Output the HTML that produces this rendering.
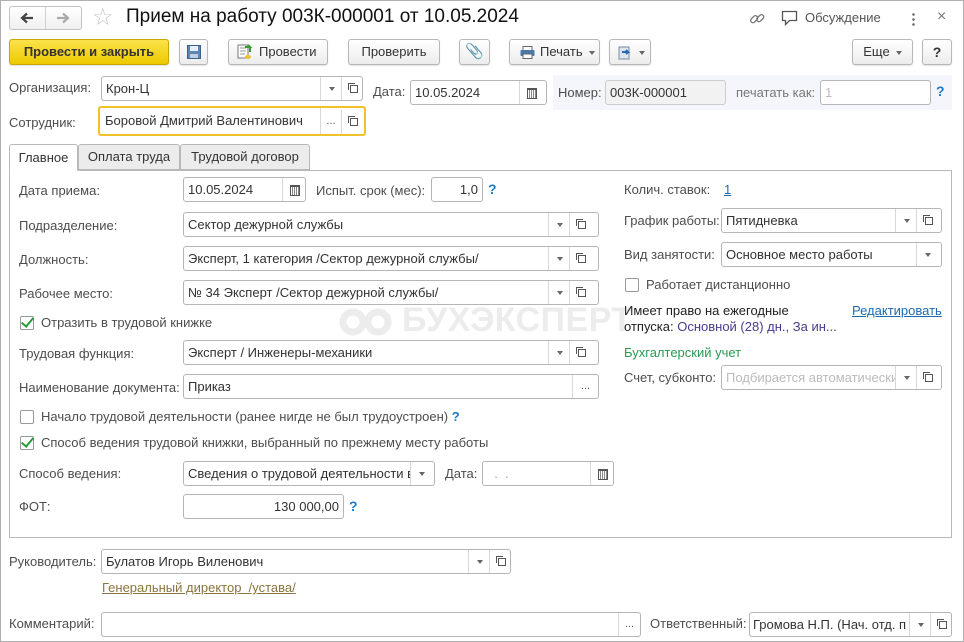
<!DOCTYPE html>
<html><head><meta charset="utf-8"><style>
*{box-sizing:border-box;margin:0;padding:0}
body{width:964px;height:642px;position:relative;overflow:hidden;background:#fff;font-family:"Liberation Sans",Arial,sans-serif;font-size:13px;color:#4d4d4d}
.frame{position:absolute;left:0;top:0;width:964px;height:642px;border:1px solid #b0b0b0}
.a{position:absolute;white-space:nowrap}
.lb{position:absolute;white-space:nowrap;color:#4d4d4d;line-height:16px}
.in{position:absolute;border:1px solid #b5b5b5;border-radius:3px;background:#fff;height:25px;color:#333;line-height:23px;padding-left:4px;overflow:hidden;white-space:nowrap}
.dd,.op,.cal,.dots{position:absolute;top:0;height:23px;width:21px;border-left:1px solid #d8d8d8;text-align:center}
.dd::after{content:"";position:absolute;left:8px;top:10px;border-left:3px solid transparent;border-right:3px solid transparent;border-top:4px solid #666}
.op::after{content:"";position:absolute;left:6px;top:6px;width:6px;height:6px;border:1px solid #555;border-right:none;border-bottom:none}
.op::before{content:"";position:absolute;left:8px;top:8px;width:6px;height:6px;border:1px solid #555;background:#fff}
.cal::after{content:"";position:absolute;left:7px;top:7px;width:8px;height:8px;border:1px solid #555;border-top-width:2px;background:repeating-linear-gradient(90deg,#fff 0 1px,#888 1px 2px)}
.dots{font-size:11px;color:#555;line-height:22px}
.btn{position:absolute;top:39px;height:26px;border:1px solid #b8b8b8;border-radius:3px;background:linear-gradient(#fff,#ececec);color:#333;text-align:center;line-height:24px;box-shadow:0 1px 1px rgba(0,0,0,.12)}
.q{position:absolute;color:#1c7ac8;font-weight:bold;font-size:14px}
.cb{position:absolute;width:14px;height:14px;border:1px solid #999;border-radius:2px;background:#fff}
.ck::after{content:"";position:absolute;left:3px;top:-2px;width:5px;height:10px;border:solid #2a9a3c;border-width:0 2.5px 2.5px 0;transform:rotate(40deg)}
.caret{display:inline-block;border-left:3px solid transparent;border-right:3px solid transparent;border-top:4px solid #666;vertical-align:middle;margin-left:6px}
</style></head><body>
<div class="frame"></div>
<!-- title bar -->
<div class="a" style="left:9px;top:6px;width:73px;height:24px;border:1px solid #c3c3c3;border-radius:3px;background:linear-gradient(#fff,#f0f0f0)"></div>
<div class="a" style="left:45px;top:7px;width:1px;height:22px;background:#d0d0d0"></div>
<svg class="a" style="left:20px;top:12px" width="14" height="12" viewBox="0 0 14 12"><path d="M13 6H3M7 1.5L2 6l5 4.5" fill="none" stroke="#444" stroke-width="2.2"/></svg>
<svg class="a" style="left:56px;top:12px" width="14" height="12" viewBox="0 0 14 12"><path d="M1 6h10M7 1.5L12 6l-5 4.5" fill="none" stroke="#aaa" stroke-width="2.2"/></svg>
<div class="a" style="left:92px;top:3px;font-size:24px;color:#c8c8c8">&#9734;</div>
<div class="a" style="left:126px;top:6px;font-size:19px;color:#111">Прием на работу 003К-000001 от 10.05.2024</div>
<svg class="a" style="left:748px;top:10px" width="18" height="18" viewBox="0 0 18 18"><g fill="none" stroke="#777" stroke-width="1.3"><rect x="2" y="7" width="8" height="4.5" rx="2.2" transform="rotate(-45 6 9)"/><rect x="8" y="6" width="8" height="4.5" rx="2.2" transform="rotate(-45 12 8)"/></g></svg>
<svg class="a" style="left:781px;top:10px" width="18" height="17" viewBox="0 0 18 17"><path d="M1.5 1.5h14v9h-7l-4 4v-4h-3z" fill="none" stroke="#555" stroke-width="1.3"/></svg>
<div class="a" style="left:805px;top:10px;color:#555">Обсуждение</div>
<div class="a" style="left:912px;top:12px;width:3px;height:14px;background:radial-gradient(circle,#777 1.2px,transparent 1.5px) 0 0/3px 5px"></div>
<div class="a" style="left:937px;top:8px;font-size:16px;color:#777">×</div>
<!-- toolbar -->
<div class="btn" style="left:9px;width:160px;background:linear-gradient(#fbe34a,#eec900);border-color:#c9a800;font-weight:bold;color:#333">Провести и закрыть</div>
<div class="btn" style="left:179px;width:29px"><svg style="margin-top:5px" width="14" height="14" viewBox="0 0 14 14"><rect x="0.5" y="0.5" width="13" height="13" fill="#5a86b8" stroke="#3a5f8a"/><rect x="3" y="1" width="8" height="5" fill="#e8eef5"/><rect x="3" y="9" width="8" height="4" fill="#c0cfe0"/></svg></div>
<div class="btn" style="left:228px;width:100px;text-align:left;padding-left:30px"><svg class="a" style="left:8px;top:4px" width="16" height="16" viewBox="0 0 16 16"><rect x="1" y="1" width="10" height="13" fill="#fff" stroke="#777"/><path d="M3 4h6M3 7h6M3 10h5" stroke="#999"/><path d="M8 3h5l-2-2M13 3v5" stroke="#3a9a3a" stroke-width="2" fill="none"/><ellipse cx="11" cy="13" rx="3" ry="2" fill="#e8c030"/></svg>Провести</div>
<div class="btn" style="left:348px;width:92px">Проверить</div>
<div class="btn" style="left:459px;width:31px;color:#666;font-size:15px">&#128206;</div>
<div class="btn" style="left:509px;width:91px;text-align:left;padding-left:30px"><svg class="a" style="left:10px;top:6px" width="15" height="13" viewBox="0 0 15 13"><rect x="3" y="0.5" width="9" height="4" fill="#fff" stroke="#666"/><rect x="0.5" y="4" width="14" height="6" rx="1" fill="#4c78a8"/><rect x="3" y="8" width="9" height="4.5" fill="#fff" stroke="#666"/></svg>Печать<span class="caret"></span></div>
<div class="btn" style="left:609px;width:42px;text-align:left;padding-left:8px"><svg style="vertical-align:middle" width="15" height="15" viewBox="0 0 15 15"><rect x="1" y="2" width="10" height="12" fill="#dde6f0" stroke="#7a8aa0"/><path d="M4 7h6l-2-2M10 7l-2 2" stroke="#2a6ab0" stroke-width="2" fill="none"/></svg><span class="caret"></span></div>
<div class="btn" style="left:852px;width:61px">Еще<span class="caret"></span></div>
<div class="btn" style="left:922px;width:30px;font-weight:bold;color:#333;font-size:14px">?</div>
<!-- header fields -->
<div class="lb" style="left:9px;top:80px">Организация:</div>
<div class="in" style="left:101px;top:76px;width:262px">Крон-Ц<span class="dd" style="left:218px"></span><span class="op" style="left:239px"></span></div>
<div class="lb" style="left:373px;top:84px">Дата:</div>
<div class="in" style="left:410px;top:80px;width:137px">10.05.2024<span class="cal" style="left:108px;width:27px"></span></div>
<div class="a" style="left:553px;top:75px;width:399px;height:35px;background:#f4f6fb"></div>
<div class="lb" style="left:558px;top:85px">Номер:</div>
<div class="in" style="left:605px;top:80px;width:121px;background:#f2f2f2;border-color:#ccc">003К-000001</div>
<div class="lb" style="left:736px;top:85px;color:#777">печатать как:</div>
<div class="in" style="left:820px;top:80px;width:111px;color:#bbb">1</div>
<div class="q" style="left:936px;top:83px">?</div>
<div class="lb" style="left:9px;top:115px">Сотрудник:</div>
<div class="in" style="left:98px;top:106px;width:268px;height:30px;border:2px solid #f2c22a;line-height:26px;padding-left:5px">Боровой Дмитрий Валентинович<span class="dots" style="left:220px;height:26px;line-height:26px">...</span><span class="op" style="left:241px;height:26px;top:2px"></span></div>
<!-- tabs -->
<div class="a" style="left:9px;top:170px;width:943px;height:368px;border:1px solid #b8b8b8"></div>
<div class="a" style="left:9px;top:144px;width:69px;height:27px;border:1px solid #b8b8b8;border-bottom:1px solid #fff;background:#fff;border-radius:3px 3px 0 0;line-height:25px;text-align:center;color:#333">Главное</div>
<div class="a" style="left:78px;top:144px;width:102px;height:26px;border:1px solid #b8b8b8;background:#ececec;border-radius:3px 3px 0 0;line-height:24px;text-align:center;color:#333">Оплата труда</div>
<div class="a" style="left:180px;top:144px;width:130px;height:26px;border:1px solid #b8b8b8;background:#ececec;border-radius:3px 3px 0 0;line-height:24px;text-align:center;color:#333">Трудовой договор</div>
<!-- watermark -->
<svg class="a" style="left:338px;top:306px" width="58" height="30" viewBox="0 0 58 30"><g fill="none" stroke="#ececec" stroke-width="7"><circle cx="15" cy="16" r="10"/><circle cx="40" cy="16" r="10"/></g></svg>
<div class="a" style="left:402px;top:301px;font-size:34px;font-weight:bold;color:#ececec;letter-spacing:0.5px">БУХЭКСПЕРТ</div>
<!-- left column -->
<div class="lb" style="left:19px;top:183px">Дата приема:</div>
<div class="in" style="left:183px;top:177px;width:123px">10.05.2024<span class="cal" style="left:98px;width:23px"></span></div>
<div class="lb" style="left:316px;top:183px">Испыт. срок (мес):</div>
<div class="in" style="left:431px;top:177px;width:52px;text-align:right;padding-right:4px">1,0</div>
<div class="q" style="left:488px;top:181px">?</div>
<div class="lb" style="left:19px;top:218px">Подразделение:</div>
<div class="in" style="left:183px;top:212px;width:416px">Сектор дежурной службы<span class="dd" style="left:364px"></span><span class="op" style="left:385px"></span></div>
<div class="lb" style="left:19px;top:252px">Должность:</div>
<div class="in" style="left:183px;top:246px;width:416px">Эксперт, 1 категория /Сектор дежурной службы/<span class="dd" style="left:364px"></span><span class="op" style="left:385px"></span></div>
<div class="lb" style="left:19px;top:286px">Рабочее место:</div>
<div class="in" style="left:183px;top:280px;width:416px">№ 34 Эксперт /Сектор дежурной службы/<span class="dd" style="left:364px"></span><span class="op" style="left:385px"></span></div>
<div class="cb ck" style="left:20px;top:316px"></div>
<div class="lb" style="left:41px;top:315px">Отразить в трудовой книжке</div>
<div class="lb" style="left:19px;top:346px">Трудовая функция:</div>
<div class="in" style="left:183px;top:340px;width:416px">Эксперт / Инженеры-механики<span class="dd" style="left:364px"></span><span class="op" style="left:385px"></span></div>
<div class="lb" style="left:19px;top:380px">Наименование документа:</div>
<div class="in" style="left:183px;top:374px;width:416px">Приказ<span class="dots" style="left:388px;width:26px">...</span></div>
<div class="cb" style="left:20px;top:410px"></div>
<div class="lb" style="left:41px;top:409px">Начало трудовой деятельности (ранее нигде не был трудоустроен) <b style="color:#1c7ac8">?</b></div>
<div class="cb ck" style="left:20px;top:436px"></div>
<div class="lb" style="left:41px;top:435px">Способ ведения трудовой книжки, выбранный по прежнему месту работы</div>
<div class="lb" style="left:19px;top:466px">Способ ведения:</div>
<div class="in" style="left:183px;top:461px;width:252px">Сведения о трудовой деятельности в<span class="dd" style="left:226px;background:#fff"></span></div>
<div class="lb" style="left:445px;top:466px">Дата:</div>
<div class="in" style="left:482px;top:461px;width:132px;color:#999">&nbsp;&nbsp;.&nbsp;&nbsp;.<span class="cal" style="left:107px;width:23px"></span></div>
<div class="lb" style="left:19px;top:499px">ФОТ:</div>
<div class="in" style="left:183px;top:494px;width:161px;text-align:right;padding-right:4px">130 000,00</div>
<div class="q" style="left:349px;top:498px">?</div>
<!-- right column -->
<div class="lb" style="left:624px;top:182px">Колич. ставок:</div>
<div class="lb" style="left:724px;top:182px;color:#1c6ab0;text-decoration:underline">1</div>
<div class="lb" style="left:624px;top:213px">График работы:</div>
<div class="in" style="left:721px;top:208px;width:221px">Пятидневка<span class="dd" style="left:173px"></span><span class="op" style="left:194px"></span></div>
<div class="lb" style="left:624px;top:247px">Вид занятости:</div>
<div class="in" style="left:721px;top:242px;width:221px">Основное место работы<span class="dd" style="left:194px"></span></div>
<div class="cb" style="left:625px;top:278px"></div>
<div class="lb" style="left:646px;top:277px">Работает дистанционно</div>
<div class="lb" style="left:624px;top:303px;color:#222">Имеет право на ежегодные</div>
<div class="lb" style="left:624px;top:319px;color:#222">отпуска: <span style="color:#4a3a8a">Основной (28) дн., За ин...</span></div>
<div class="lb" style="left:852px;top:303px;color:#1c6ab0;text-decoration:underline">Редактировать</div>
<div class="lb" style="left:624px;top:345px;color:#2a9a50">Бухгалтерский учет</div>
<div class="lb" style="left:624px;top:370px">Счет, субконто:</div>
<div class="in" style="left:721px;top:365px;width:221px;color:#bbb">Подбирается автоматически<span class="dd" style="left:173px;background:#fff"></span><span class="op" style="left:194px"></span></div>
<!-- footer -->
<div class="lb" style="left:9px;top:554px">Руководитель:</div>
<div class="in" style="left:101px;top:549px;width:410px">Булатов Игорь Виленович<span class="dd" style="left:366px"></span><span class="op" style="left:387px"></span></div>
<div class="lb" style="left:102px;top:580px;color:#8a7440;text-decoration:underline">Генеральный директор &nbsp;/устава/</div>
<div class="lb" style="left:9px;top:616px">Комментарий:</div>
<div class="in" style="left:101px;top:612px;width:540px"><span class="dots" style="left:516px;width:22px">...</span></div>
<div class="lb" style="left:650px;top:616px">Ответственный:</div>
<div class="in" style="left:749px;top:612px;width:203px;padding-left:3px">Громова Н.П. (Нач. отд. п<span class="dd" style="left:159px"></span><span class="op" style="left:180px"></span></div>
</body></html>
